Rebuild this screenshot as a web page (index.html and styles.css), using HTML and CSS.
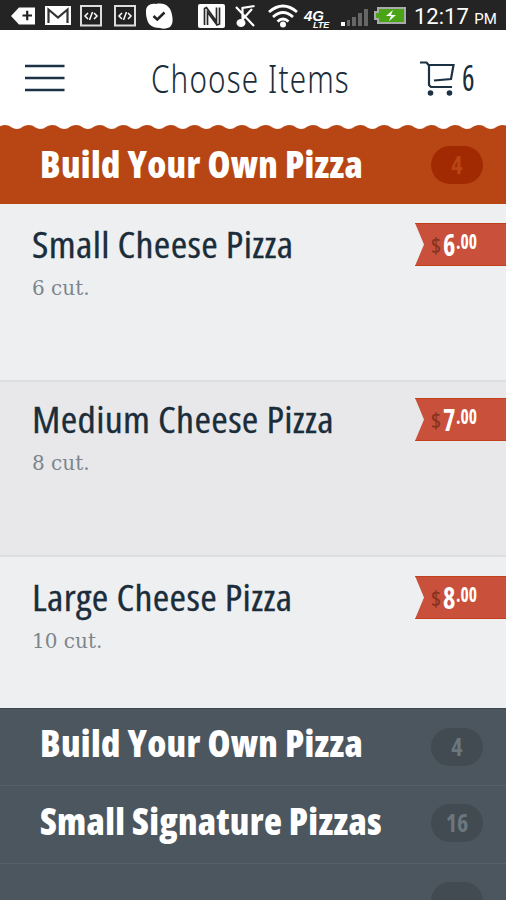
FILE: index.html
```html
<!DOCTYPE html>
<html lang="en">
<head>
    <meta charset="UTF-8">
    <meta name="viewport" content="width=device-width, initial-scale=1.0">
    <title>Choose Items</title>
    <link rel="stylesheet" href="styles.css">
</head>
<body>
    <div class="status">
        <svg class="status-icons" width="410" height="30" viewBox="0 0 410 30">
            <path d="M11 16l8-8.500h16v17H19z" fill="#fff"/>
            <path d="M22.500 15.500h9.500M27.200 10.800v9.500" stroke="#222" stroke-width="2.200"/>
            <rect x="45" y="6" width="26" height="19" fill="#fff"/>
            <path d="M48.500 23V9.500l9.500 8 9.500-8V23" fill="none" stroke="#333" stroke-width="2.200"/>
            <g fill="#222" stroke="#ddd" stroke-width="2">
                <rect x="81" y="6" width="20" height="19.500"/>
                <rect x="115" y="6" width="20" height="19.500"/>
            </g>
            <g fill="none" stroke="#fff" stroke-width="1.500">
                <path id="code" d="M88 13l-3 3 3 3M94 13l3 3-3 3M92.500 12l-3 8"/>
                <use href="#code" x="34"/>
            </g>
            <path d="M146 11c0-5 4-8 10-7 9-2 15 3 16 11 1 5 1 9-2 12-4 2-7 2-10 1-7 0-12-3-13-9-1-3-1-5-1-8z" fill="#fff"/>
            <path d="M153.500 16l3.800 3.500 7.200-7" fill="none" stroke="#222" stroke-width="2.500"/>
            <rect x="198" y="4" width="27" height="24" rx="2" fill="#fff"/>
            <path d="M204.500 25V8.500l2-1 10 14V7.500M207.500 25V12l9.500 13 2.500-1V7.500" fill="none" stroke="#2a2a2a" stroke-width="1.700"/>
            <path d="M242.500 22V8l12-2M236 7l18 19M252 9l-10 11" fill="none" stroke="#fff" stroke-width="2.200"/>
            <ellipse cx="241" cy="23" rx="4.500" ry="4" fill="#fff"/>
            <g fill="none" stroke="#fff" stroke-width="2.800">
                <path d="M269 12q14-12 28 0M273 17q10-9 20 0M277.500 21.500q5.500-5 11 0"/>
            </g>
            <circle cx="283" cy="24.500" r="3" fill="#fff"/>
            <text x="304" y="21" class="net-4g">4G</text>
            <text x="313" y="28" class="net-lte">LTE</text>
            <rect x="341" y="22" width="4" height="4" fill="#fff"/>
            <path d="M347 20h3v6h-3zM352 17h4v9h-4zM358 13h4v13h-4zM364 9h4v17h-4z" fill="#666"/>
            <path d="M378 8h27v15h-27v-4h-3v-7h3z" fill="#4aa516" stroke="#aaa" stroke-width="2"/>
            <path d="M393 10l-7 6h5l-2 5 7-6h-5z" fill="#fff"/>
        </svg>
        <span class="clock">12:17 <small>PM</small></span>
    </div>

    <header class="header">
        <svg class="menu" width="40" height="30" viewBox="0 0 40 30">
            <path d="M0 3h39.500M0 15h39.500M0 27h39.500" stroke="#1b3144" stroke-width="2.500"/>
        </svg>
        <h1>Choose Items</h1>
        <div class="cart">
            <svg width="36" height="36" viewBox="0 0 36 36" fill="none" stroke="#1b3144" stroke-width="2.200">
                <path d="M0 2.500h6.500l2.500 3v19.500l2 2h21M9 5h24.500l-2.500 14-17 1.500"/>
                <circle cx="10.500" cy="33" r="2.800" fill="#1b3144" stroke="none"/>
                <circle cx="29.500" cy="33" r="2.800" fill="#1b3144" stroke="none"/>
            </svg>
            <span class="cart-count">6</span>
        </div>
    </header>

    <svg class="scallop" width="506" height="4">
        <defs>
            <pattern id="wave" x="-7" width="23.700" height="4" patternUnits="userSpaceOnUse">
                <path d="M0 4c5 0 6-4 11.850-4s6.850 4 11.850 4z" fill="#b84614"/>
            </pattern>
        </defs>
        <rect width="506" height="4" fill="url(#wave)"/>
    </svg>
    <section class="category active">
        <h2>Build Your Own Pizza</h2>
        <span class="count">4</span>
    </section>

    <ul class="items">
        <li class="item">
            <div>
                <h3>Small Cheese Pizza</h3>
                <p>6 cut.</p>
            </div>
            <div class="price"><i>$</i><b>6</b><sup>.00</sup></div>
        </li>
        <li class="item alt">
            <div>
                <h3>Medium Cheese Pizza</h3>
                <p>8 cut.</p>
            </div>
            <div class="price"><i>$</i><b>7</b><sup>.00</sup></div>
        </li>
        <li class="item last">
            <div>
                <h3>Large Cheese Pizza</h3>
                <p>10 cut.</p>
            </div>
            <div class="price"><i>$</i><b>8</b><sup>.00</sup></div>
        </li>
    </ul>

    <section class="category first">
        <h2>Build Your Own Pizza</h2>
        <span class="count">4</span>
    </section>
    <section class="category">
        <h2>Small Signature Pizzas</h2>
        <span class="count">16</span>
    </section>
    <section class="category">
        <h2></h2>
        <span class="count"></span>
    </section>
</body>
</html>
```
FILE: styles.css
```css
* {
    box-sizing: border-box;
}
body {
    margin: 0;
    height: 900px;
    overflow: hidden;
    background: #fff;
    color: #1b2d3a;
    font-family: "Open Sans", "Noto Sans", sans-serif;
    font-stretch: 75%;
}
h1, h2, h3, p, ul {
    margin: 0;
    padding: 0;
    font-weight: normal;
    white-space: nowrap;
}
.status {
    display: flex;
    height: 30px;
    background: #242424;
    color: #fff;
}
.status-icons {
    flex: none;
}
.net-4g, .net-lte {
    fill: #fff;
    font: italic bold 15px "Liberation Sans", sans-serif;
}
.net-lte {
    font-size: 9px;
}
.clock {
    padding-left: 4px;
    font: 22px/33px Roboto, sans-serif;
    white-space: nowrap;
}
.clock small {
    font-size: 15px;
}
.header {
    display: flex;
    align-items: center;
    height: 95px;
    padding: 0 31px 0 25px;
}
.menu, .cart svg {
    flex: none;
}
.header h1 {
    width: 200px;
    margin-left: 86px;
    font-family: "Noto Sans", sans-serif;
    font-size: 39px;
    font-weight: 300;
    letter-spacing: 1.5px;
    transform: scaleX(.76);
    transform-origin: left;
}
.cart {
    display: flex;
    align-items: center;
    margin-left: auto;
}
.cart-count {
    width: 13px;
    margin-left: 6px;
    font-size: 36px;
    line-height: 44px;
    transform: scaleX(.82);
    transform-origin: left;
}
.scallop {
    display: block;
}
.category {
    display: flex;
    align-items: center;
    justify-content: space-between;
    height: 78px;
    padding: 0 23px 3px 40px;
    background: #4c565e;
    border-top: 1px solid #566068;
}
.category h2 {
    padding-bottom: 5px;
    color: #fff;
    font-size: 37px;
    font-weight: 800;
    letter-spacing: .3px;
    line-height: 50px;
}
.category.active {
    height: 75px;
    background: #b84614;
    border: 0;
}
.category.active h2 {
    padding-bottom: 3px;
}
.category.first {
    height: 77px;
    padding-bottom: 0;
    border-color: #3d474f;
}
.category.first h2 {
    padding-bottom: 8px;
}
.count {
    width: 52px;
    height: 38px;
    border-radius: 19px;
    background: #414b51;
    color: #6b767e;
    font-size: 24px;
    font-weight: bold;
    line-height: 38px;
    text-align: center;
}
.active .count {
    background: #a12a03;
    color: #b84614;
}
.items {
    list-style: none;
}
.item {
    display: flex;
    justify-content: space-between;
    height: 178px;
    padding: 19px 0 0 32px;
    background: #eeeff1;
    border-bottom: 2px solid #dddee0;
}
.item.alt {
    height: 175px;
    background: #e8e8ea;
    padding-top: 16px;
}
.item.last {
    height: 151px;
    border: 0;
}
.item h3 {
    font-size: 37px;
    letter-spacing: .3px;
    line-height: 42px;
    transform: scaleX(1.08);
    transform-origin: left;
    -webkit-text-stroke: .3px;
}
.item p {
    margin-top: 9px;
    color: #7d858c;
    font: 20px/28px "DejaVu Serif", serif;
}
.price {
    display: flex;
    width: 91px;
    height: 43px;
    padding-left: 16px;
    background: #c9503a;
    border: solid #c0401c;
    border-width: 1px 0;
    clip-path: polygon(0 0, 100% 0, 100% 100%, 0 100%, 9px 50%);
    color: #fff;
    line-height: 41px;
}
.price i {
    width: 12px;
    color: #87331d;
    font-size: 22px;
    font-style: normal;
    font-weight: 600;
}
.price b {
    width: 13px;
    font-size: 31px;
    transform: scaleX(.85);
    transform-origin: left;
}
.price sup {
    font-size: 22px;
    font-weight: bold;
    line-height: 32px;
    transform: scaleX(.8);
    transform-origin: left;
}
```
